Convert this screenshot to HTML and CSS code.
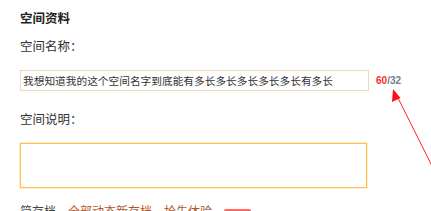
FILE: index.html
```html
<!DOCTYPE html>
<html lang="zh">
<head>
<meta charset="utf-8">
<title>空间资料</title>
<link rel="stylesheet" href="styles.css">
</head>
<body>
<div class="page">
  <h2 class="title">空间资料</h2>
  <div class="label">空间名称：</div>
  <div class="name-row">
    <div class="name-input">我想知道我的这个空间名字到底能有多长多长多长多长多长有多长</div>
    <div class="counter"><span class="over">60</span>/32</div>
  </div>
  <div class="label label-desc">空间说明：</div>
  <div class="desc-box"></div>
  <div class="footer-row">
    <span class="plain">简存档</span>
    <span class="link">全部动态新存档</span>
    <span class="link">抢先体验</span>
    <span class="badge">NEW</span>
  </div>
  <svg class="arrow" width="60" height="110" viewBox="0 0 60 110">
    <line x1="42" y1="95" x2="5" y2="21" stroke="#f22" stroke-width="1"/>
    <polygon points="3,18 2,31 10.5,27" fill="#f11"/>
  </svg>
</div>
</body>
</html>
```
FILE: styles.css
```css
html, body {
  margin: 0;
  padding: 0;
  background: #fff;
}
.page {
  position: relative;
  width: 431px;
  height: 211px;
  overflow: hidden;
  padding-left: 20px;
  box-sizing: border-box;
  font-family: "Noto Sans CJK SC", "Noto Sans", sans-serif;
  color: #333;
}
.title {
  margin: 9px 0 0 0;
  font-size: 12.5px;
  line-height: 18px;
  font-weight: bold;
  color: #222;
}
.label {
  margin-top: 10px;
  font-size: 12.5px;
  line-height: 18px;
  color: #333;
}
.name-row {
  display: flex;
  align-items: center;
  margin-top: 15px;
}
.name-input {
  width: 345px;
  height: 19px;
  border: 1px solid #e9dcb6;
  padding-left: 2px;
  box-sizing: content-box;
  font-size: 10.7px;
  line-height: 19px;
  color: #333;
  white-space: nowrap;
  overflow: hidden;
}
.counter {
  margin-left: 7px;
  font-family: "Liberation Sans", Arial, sans-serif;
  font-weight: bold;
  font-size: 10px;
  color: #6e7d8c;
}
.over {
  color: #ff2b2b;
}
.label-desc {
  margin-top: 19px;
}
.desc-box {
  margin-top: 15px;
  width: 345px;
  height: 43px;
  border: 1px solid #fdc14f;
  box-shadow: 0 0 0 0.5px #fedb96;
}
.footer-row {
  display: flex;
  align-items: center;
  gap: 12px;
  margin-top: 14px;
  font-size: 12px;
  line-height: 18px;
}
.plain {
  color: #444;
}
.link {
  color: #b0572a;
}
.badge {
  background: #f66;
  color: #fff;
  font-family: "Liberation Sans", Arial, sans-serif;
  font-size: 9px;
  line-height: 11px;
  padding: 0 3px;
  border-radius: 2px;
  margin-top: 6px;
}
.arrow {
  position: absolute;
  left: 390px;
  top: 71px;
}
```
